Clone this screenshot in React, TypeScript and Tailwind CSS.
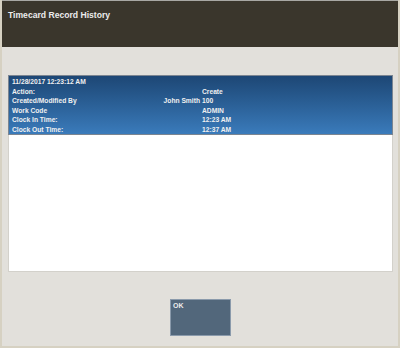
const rows: { label: string; mid?: string; value: string }[] = [
  { label: 'Action:', value: 'Create' },
  { label: 'Created/Modified By', mid: 'John Smith', value: '100' },
  { label: 'Work Code', value: 'ADMIN' },
  { label: 'Clock In Time:', value: '12:23 AM' },
  { label: 'Clock Out Time:', value: '12:37 AM' },
];

export default function App() {
  return (
    <div
      className="w-[400px] h-[348px] bg-[#e2e0db] border-l-2 border-r-2 border-b-2 border-[#d6d1c2] flex flex-col overflow-hidden"
      style={{ fontFamily: '"Liberation Sans", Arial, sans-serif' }}
    >
      {/* Title bar */}
      <div className="h-[47px] bg-[#3a362c] border-t border-[#a8a8a4] -mx-[2px] px-[8px] pt-[9px]">
        <h1 className="text-[8.6px] font-bold text-[#ececec] leading-[10px]">Timecard Record History</h1>
      </div>

      {/* Record panel */}
      <div className="pt-[28px] pl-[6px] pr-[5px]">
        <div className="h-[197px] bg-white border border-[#d3d1cb]">
          <div className="-m-px border border-[#7b8591] bg-gradient-to-b from-[#1d4775] to-[#3a7bbb] pl-[3px] pt-[1px] h-[60px] text-[6.7px] font-bold text-[#f0f0f0] leading-[9.6px]">
            <div>11/28/2017 12:23:12 AM</div>
            {rows.map((r) => (
              <div key={r.label} className="flex">
                <div className="w-[190px] flex justify-between pr-[2px]">
                  <span>{r.label}</span>
                  {r.mid && <span>{r.mid}</span>}
                </div>
                <span>{r.value}</span>
              </div>
            ))}
          </div>
        </div>
      </div>

      {/* Actions */}
      <div className="flex justify-center pt-[27px] pl-[1px]">
        <button className="w-[61px] h-[37px] bg-[#52677b] border border-[#8a9aab] text-left px-[2px] pt-[2px] flex">
          <span className="text-[7px] font-bold text-[#ececec] leading-[8px]">OK</span>
        </button>
      </div>
    </div>
  );
}
